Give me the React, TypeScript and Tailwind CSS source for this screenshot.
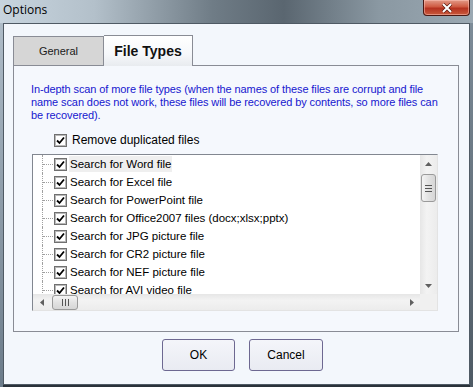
import React from "react";

const items = [
  "Search for Word file",
  "Search for Excel file",
  "Search for PowerPoint file",
  "Search for Office2007 files (docx;xlsx;pptx)",
  "Search for JPG picture file",
  "Search for CR2 picture file",
  "Search for NEF picture file",
  "Search for AVI video file",
];

const CheckBox = () => (
  <div className="flex h-[13px] w-[13px] shrink-0 items-center justify-center border border-[#707070] bg-white shadow-[inset_0_0_0_1px_#b8b8b8]">
    <svg width="9" height="9" viewBox="0 0 9 9">
      <path d="M1 4.5 L3.5 7 L8 1.5" fill="none" stroke="#000" strokeWidth="1.8" />
    </svg>
  </div>
);

const Arrow = ({ dir }: { dir: "up" | "down" | "left" | "right" }) => {
  const pts = {
    up: "0,4 7,4 3.5,0",
    down: "0,0 7,0 3.5,4",
    left: "4,0 4,7 0,3.5",
    right: "0,0 0,7 4,3.5",
  }[dir];
  const w = dir === "up" || dir === "down" ? 7 : 4;
  const h = dir === "up" || dir === "down" ? 4 : 7;
  return (
    <svg width={w} height={h} viewBox={`0 0 ${w} ${h}`}>
      <polygon points={pts} fill="#606060" />
    </svg>
  );
};

const Grip = ({ vertical }: { vertical: boolean }) => (
  <div className={vertical ? "flex flex-col gap-[2px]" : "flex gap-[2px]"}>
    {[0, 1, 2].map((i) => (
      <div key={i} className={vertical ? "h-px w-[7px] bg-[#555]" : "h-[7px] w-px bg-[#555]"} />
    ))}
  </div>
);

export default function App() {
  return (
    <div className="flex h-[387px] w-[473px] flex-col overflow-hidden bg-[#2a323a] font-['Liberation_Sans',Arial,sans-serif]">
      {/* title bar */}
      <div className="flex h-[23px] shrink-0 items-start justify-between bg-[linear-gradient(90deg,#c7d4de_0%,#b3c0ca_20%,#6f7c86_45%,#5a6670_60%,#8a98a2_80%,#9aa8b2_100%)]">
        <span className="pl-[3px] pt-[2px] font-['Open_Sans','Noto_Sans',sans-serif] text-[12px] leading-[16px] text-black">
          Options
        </span>
        <div className="mr-[3px] flex h-[16px] w-[47px] items-center justify-center rounded-b-[4px] border border-t-0 border-[#4a1812] bg-[linear-gradient(180deg,#e29a88_0%,#cf5a42_45%,#b53220_55%,#c85a3c_100%)] shadow-[inset_0_0_0_1px_rgba(255,200,190,0.5)]">
          <svg width="12" height="10" viewBox="0 0 12 10">
            <path d="M2 1 L10 9 M10 1 L2 9" stroke="#5a1a10" strokeWidth="3.4" />
            <path d="M2 1 L10 9 M10 1 L2 9" stroke="#fff" strokeWidth="2" />
          </svg>
        </div>
      </div>

      <div className="flex flex-1">
        <div className="w-[3px] bg-[linear-gradient(180deg,#aebcc8,#6c7c8a)]" />
        {/* client */}
        <div className="flex h-[362px] w-[467px] flex-col border border-[#4f5a64] bg-[#f3f7fc]">
          {/* tabs */}
          <div className="ml-[9px] mt-[11px] flex h-[30px] items-end">
            <div className="flex h-[29px] w-[91px] items-center justify-center border border-b-0 border-[#898c95] bg-[#d6d6d6] text-[11px] text-[#1a1a1a]">
              General
            </div>
            <div className="relative z-10 -mb-px flex h-[31px] w-[89px] items-center justify-center border border-b-0 border-l-0 border-[#898c95] bg-[linear-gradient(180deg,#ffffff_0%,#f6f8fb_60%,#e8ebef_100%)] pt-px text-[14px] font-bold text-[#111]">
              File Types
            </div>
          </div>
          {/* panel */}
          <div className="ml-[9px] flex h-[267px] w-[446px] flex-col border border-[#898c95] bg-[#f5f8fd] pl-[17px] pt-[17px]">
            <p className="whitespace-nowrap text-[11px] leading-[13px] tracking-[-0.1px] text-[#1717cf]">
              In-depth scan of more file types (when the names of these files are corrupt and file
              <br />
              name scan does not work, these files will be recovered by contents, so more files can
              <br />
              be recovered).
            </p>
            <div className="ml-[23px] mt-[11px] flex h-[14px] items-center gap-[5px]">
              <CheckBox />
              <span className="text-[12px] leading-[14px] text-black">Remove duplicated files</span>
            </div>
            {/* list */}
            <div className="ml-px mt-[7px] flex h-[157px] w-[406px] flex-col border border-b-[#e3e3e3] border-l-[#828790] border-r-[#e3e3e3] border-t-[#828790] bg-white">
              <div className="flex h-[139px]">
                <div className="flex-1 overflow-hidden">
                  {items.map((t, i) => (
                    <div key={t} className="flex h-[18px] items-center">
                      <div className="ml-[9px] h-full w-[12px] border-l border-dotted border-[#a0a0a0]">
                        <div className="mt-[9px] w-[10px] border-t border-dotted border-[#a0a0a0]" />
                      </div>
                      <CheckBox />
                      <span
                        className={
                          "ml-[2px] whitespace-nowrap px-px text-[11.5px] leading-[16px] text-black " +
                          (i === 0 ? "bg-[#efefef]" : "")
                        }
                      >
                        {t}
                      </span>
                    </div>
                  ))}
                </div>
                {/* vertical scrollbar */}
                <div className="flex w-[17px] flex-col items-center bg-[linear-gradient(90deg,#e6e6e6,#f3f3f3_40%,#ececec)]">
                  <div className="flex h-[17px] items-center justify-center">
                    <Arrow dir="up" />
                  </div>
                  <div className="mt-[2px] flex h-[28px] w-[15px] items-center justify-center rounded-[3px] border border-[#9a9a9a] bg-[linear-gradient(90deg,#f4f4f4,#e2e2e2_50%,#d6d6d6)]">
                    <Grip vertical />
                  </div>
                  <div className="flex-1" />
                  <div className="flex h-[17px] items-center justify-center">
                    <Arrow dir="down" />
                  </div>
                </div>
              </div>
              {/* horizontal scrollbar */}
              <div className="flex h-[17px] bg-[#f0f0f0]">
                <div className="flex flex-1 items-center bg-[linear-gradient(180deg,#e6e6e6,#f3f3f3_40%,#ececec)]">
                  <div className="flex w-[17px] items-center justify-center">
                    <Arrow dir="left" />
                  </div>
                  <div className="ml-[2px] flex h-[15px] w-[26px] items-center justify-center rounded-[3px] border border-[#9a9a9a] bg-[linear-gradient(180deg,#f4f4f4,#e2e2e2_50%,#d6d6d6)]">
                    <Grip vertical={false} />
                  </div>
                  <div className="flex-1" />
                  <div className="flex w-[17px] items-center justify-center">
                    <Arrow dir="right" />
                  </div>
                </div>
                <div className="w-[17px] bg-[#f0f0f0]" />
              </div>
            </div>
          </div>
          {/* buttons */}
          <div className="ml-[158px] mt-[7px] flex gap-[14px]">
            <button className="h-[32px] w-[73px] rounded-[3px] border border-[#6d6891] bg-[linear-gradient(180deg,#f4f5fa,#e9ebf2)] text-[12px] text-black">
              OK
            </button>
            <button className="h-[32px] w-[74px] rounded-[3px] border border-[#6d6891] bg-[linear-gradient(180deg,#f4f5fa,#e9ebf2)] text-[12px] text-black">
              Cancel
            </button>
          </div>
        </div>
        <div className="w-[3px] bg-[linear-gradient(180deg,#7d8c98,#4e5a64)]" />
      </div>
    </div>
  );
}
